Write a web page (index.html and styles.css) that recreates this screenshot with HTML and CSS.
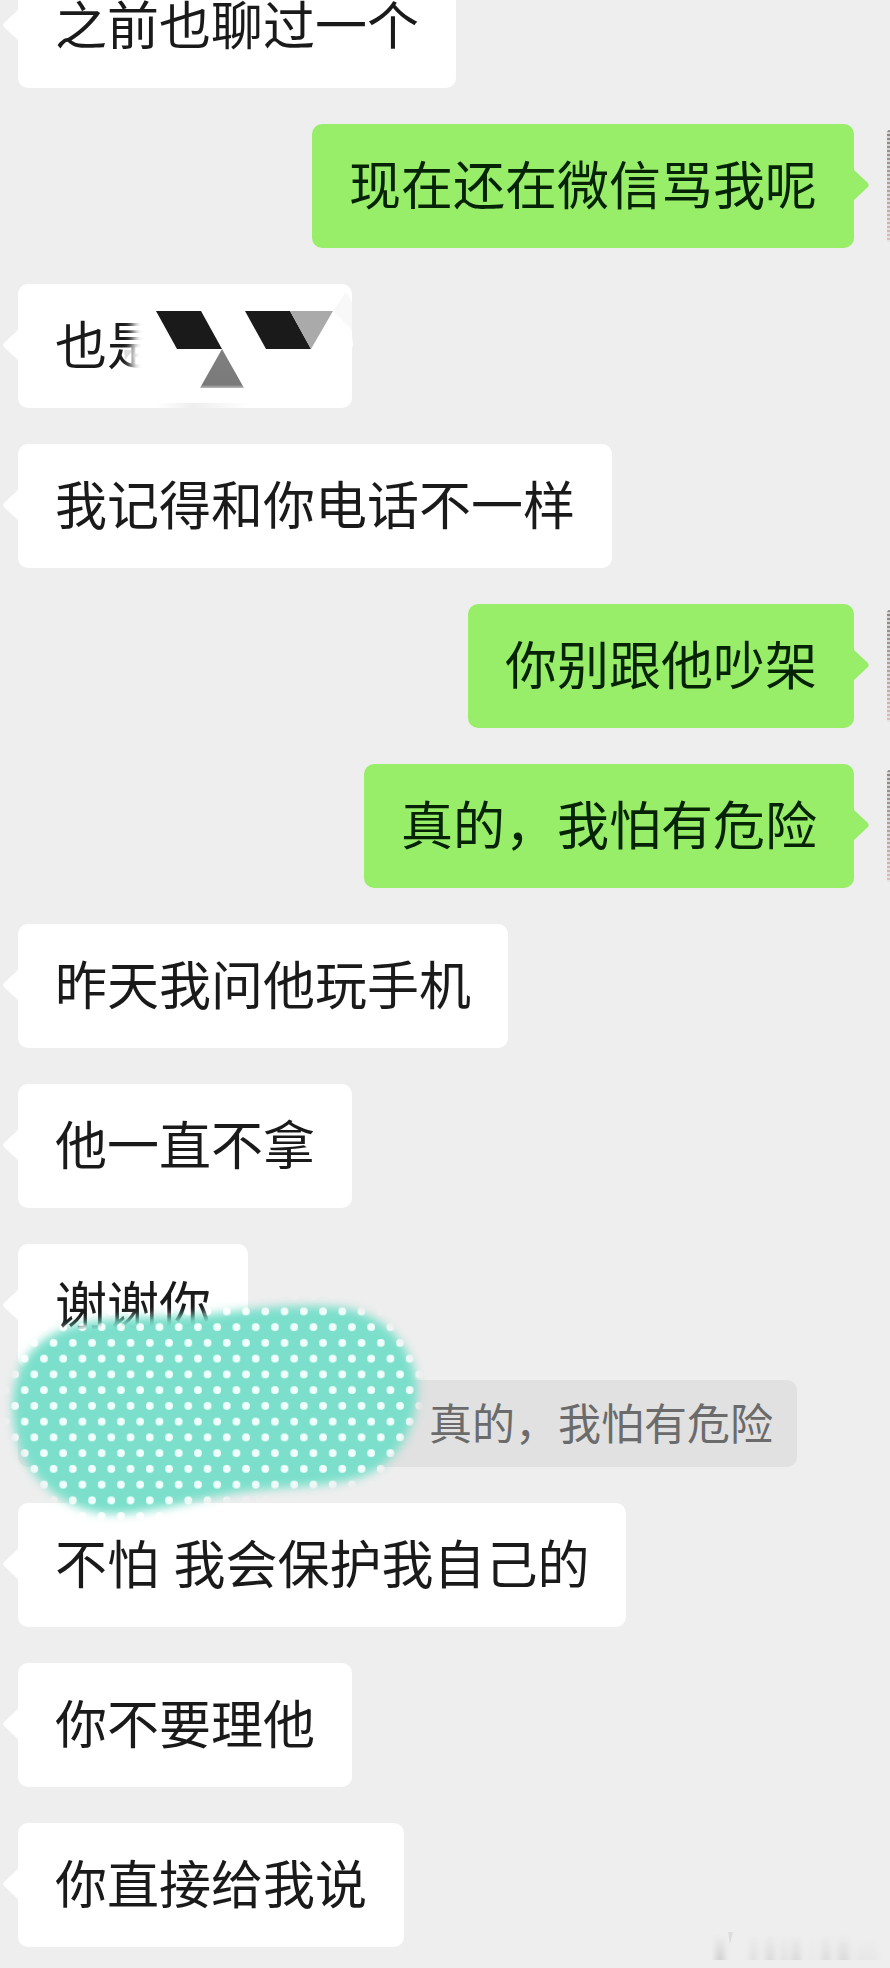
FILE: index.html
```html
<!DOCTYPE html>
<html lang="zh-CN">
<head>
<meta charset="utf-8">
<meta name="viewport" content="width=device-width, initial-scale=1">
<title>聊天记录</title>
<link rel="stylesheet" href="styles.css">
</head>
<body>
<main class="chat">
  <div class="row received first"><p class="bubble">之前也聊过一个</p></div>
  <div class="row sent"><p class="bubble">现在还在微信骂我呢</p><span class="avatar"></span></div>
  <div class="row received">
    <div class="bubble covered">
      <p class="text">也是</p>
      <svg class="cover" viewBox="0 0 340 124" aria-hidden="true">
        <defs>
          <filter id="soft" x="-20%" y="-20%" width="140%" height="140%"><feGaussianBlur stdDeviation="4"/></filter>
          <linearGradient id="smudge" x1="0" x2="1"><stop offset="0" stop-color="#eee" stop-opacity="0"/><stop offset=".4" stop-color="#eee"/><stop offset="1" stop-color="#eee" stop-opacity="0"/></linearGradient>
          <linearGradient id="grey" x1="0" y1="0" x2="0" y2="1"><stop offset="0" stop-color="#808080"/><stop offset=".92" stop-color="#7a7a7a"/><stop offset="1" stop-color="#bbb"/></linearGradient>
        </defs>
        <path d="M119 22H200V106H126L114 86L112 70L116 54L114 40Z" fill="#fff" filter="url(#soft)"/>
        <path d="M106 66L115 66L107 76Z" fill="#bbb" opacity=".5"/>
        <path d="M138 119H232V124H138Z" fill="url(#smudge)"/>
        <path d="M328 8L334 18V46L315 27Z" fill="#f8f8f8"/>
        <path d="M315 27L334 52L335 62L330 72L310 60Z" fill="#fff"/>
        <path d="M138 27H183L204 65H159Z" fill="#1a1a1a"/>
        <path d="M227 27H272L293 65H248Z" fill="#1a1a1a"/>
        <path d="M272 27H315L293 65Z" fill="#aaa"/>
        <path d="M204 65L226 104H182Z" fill="url(#grey)"/>
      </svg>
    </div>
  </div>
  <div class="row received"><p class="bubble">我记得和你电话不一样</p></div>
  <div class="row sent"><p class="bubble">你别跟他吵架</p><span class="avatar"></span></div>
  <div class="row sent"><p class="bubble">真的，我怕有危险</p><span class="avatar"></span></div>
  <div class="row received"><p class="bubble">昨天我问他玩手机</p></div>
  <div class="row received"><p class="bubble">他一直不拿</p></div>
  <div class="row received quoting">
    <p class="bubble">谢谢你</p>
    <blockquote class="quote">真的，我怕有危险</blockquote>
    <svg class="blob" viewBox="0 0 440 260" aria-hidden="true">
      <defs>
        <pattern id="dots" x="217.2" y="23.5" width="19.25" height="31.5" patternUnits="userSpaceOnUse">
          <rect width="19.25" height="31.5" fill="#7bdfcb"/>
          <circle cx="9.6" cy="7.8" r="3.9" fill="#effffc"/>
          <circle cx="0" cy="23.6" r="3.9" fill="#effffc"/>
          <circle cx="19.25" cy="23.6" r="3.9" fill="#effffc"/>
        </pattern>
        <filter id="feather" x="-10%" y="-10%" width="120%" height="120%"><feGaussianBlur stdDeviation="5"/></filter>
        <mask id="shape" maskUnits="userSpaceOnUse" x="0" y="0" width="440" height="260">
          <path d="M102 40C145 35 185 38 228 32C265 27 300 24 337 27C382 31 412 64 417 102C420 144 398 184 361 197C325 208 290 206 251 211C207 216 160 232 118 234C72 235 37 206 22 174C10 144 9 112 22 84C38 58 62 45 102 40Z" fill="#fff" filter="url(#feather)"/>
        </mask>
      </defs>
      <rect width="440" height="260" fill="url(#dots)" mask="url(#shape)"/>
    </svg>
  </div>
  <div class="row received"><p class="bubble">不怕 我会保护我自己的</p></div>
  <div class="row received"><p class="bubble">你不要理他</p></div>
  <div class="row received"><p class="bubble">你直接给我说</p></div>
  <svg class="watermark" viewBox="0 0 172 32" aria-hidden="true">
    <defs>
      <linearGradient id="fade" x1="0" y1="0" x2="0" y2="1"><stop offset="0" stop-color="#ccc" stop-opacity="0"/><stop offset="1" stop-color="#ccc"/></linearGradient>
      <filter id="haze"><feGaussianBlur stdDeviation="3 0"/></filter>
    </defs>
    <g fill="url(#fade)" filter="url(#haze)">
      <path d="M4 4H12V30H4Z"/>
      <path d="M38 4H45V30H38Z" opacity=".5"/>
      <path d="M54 4H62V30H54Z" opacity=".7"/>
      <path d="M69 4H75V30H69Z" opacity=".5"/>
      <path d="M80 4H88V30H80Z" opacity=".7"/>
      <path d="M97 8H103V30H97Z" opacity=".2"/>
      <path d="M110 4H118V30H110Z" opacity=".6"/>
      <path d="M126 4H137V30H126Z" opacity=".6"/>
      <path d="M144 8H166V30H144Z" opacity=".2"/>
    </g>
    <path d="M16 2H21L18 14Z" fill="#ddd"/>
  </svg>
</main>
</body>
</html>
```
FILE: styles.css
```css
* {
  box-sizing: border-box;
}

body {
  margin: 0;
  background: #eee;
  color: #1a1a1a;
  font-family: "Liberation Sans", "Noto Sans CJK SC", sans-serif;
  font-size: 52px;
  line-height: 54px;
}

p,
blockquote {
  margin: 0;
}

.chat {
  position: relative;
  display: flex;
  flex-direction: column;
  gap: 36px;
  padding-bottom: 21px;
}

.row {
  position: relative;
  display: flex;
}

.received {
  padding-left: 18px;
}

.sent {
  justify-content: flex-end;
  align-items: center;
  gap: 33px;
}

.bubble {
  position: relative;
  padding: 36px 37px 34px;
  border-radius: 10px;
  background: #fff;
}

.bubble::before {
  content: "";
  position: absolute;
  bottom: 47px;
  left: -15px;
  width: 16px;
  height: 32px;
  background: #fff;
  clip-path: polygon(100% 0, 10% 42%, 0 50%, 10% 58%, 100% 100%);
}

.first .bubble {
  padding-top: 0;
  border-radius: 0 0 10px 10px;
}

.sent .bubble {
  background: #98ee69;
  color: #062306;
}

.sent .bubble::before {
  left: auto;
  right: -15px;
  background: #98ee69;
  clip-path: polygon(0 0, 90% 42%, 100% 50%, 90% 58%, 0 100%);
}

.avatar {
  width: 3px;
  height: 112px;
  border-radius: 3px 0 0 3px;
  background:
    repeating-linear-gradient(#eee0 0 2px, #eeeb 2px 4px),
    linear-gradient(#8a8684, #b5a6a2 60%, #dcbfba);
}

.covered {
  min-width: 334px;
}

.cover {
  position: absolute;
  top: 0;
  left: 0;
  width: 340px;
  height: 124px;
}

.quoting {
  flex-direction: column;
  align-items: flex-start;
  gap: 12px;
}

.quote {
  width: 779px;
  max-width: 100%;
  padding: 15px 24px 12px;
  border-radius: 10px;
  background: #e1e1e1;
  color: #6b6b6b;
  font-size: 43px;
  line-height: 60px;
  text-align: right;
}

.blob {
  position: absolute;
  top: 36px;
  left: 0;
  width: 440px;
  height: 260px;
  z-index: 1;
}

.watermark {
  position: absolute;
  right: 6px;
  bottom: 6px;
  width: 172px;
  height: 32px;
}
```
